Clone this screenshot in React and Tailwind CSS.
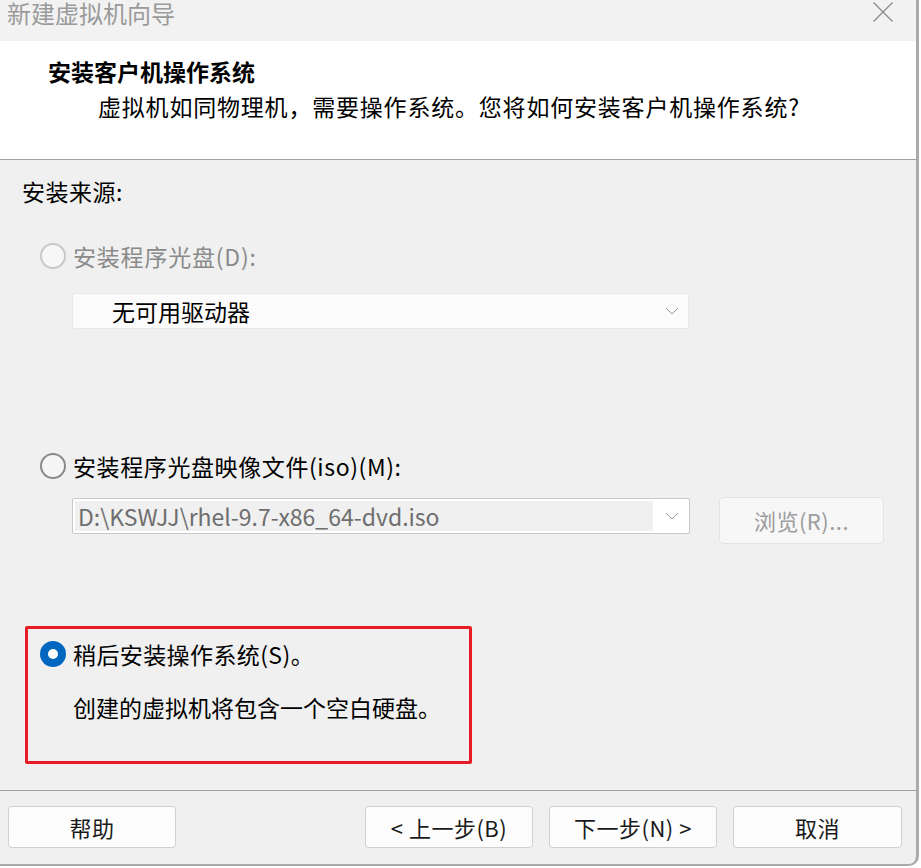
import React from "react";

const F = { fontFamily: '"Noto Sans CJK SC", "Noto Sans", sans-serif' };

function Chevron() {
  return (
    <svg width="14" height="8" viewBox="0 0 14 8" className="shrink-0">
      <polyline points="1,1 7,7 13,1" fill="none" stroke="#9a9a9a" strokeWidth="1" />
    </svg>
  );
}

function Radio({ checked, disabled }) {
  if (checked) {
    return (
      <div className="w-[26px] h-[26px] rounded-full bg-[#0067c0] flex items-center justify-center shrink-0">
        <div className="w-[10px] h-[10px] rounded-full bg-white" />
      </div>
    );
  }
  return (
    <div
      className={
        "w-[26px] h-[26px] rounded-full border-2 shrink-0 " +
        (disabled ? "border-[#c9c9c9] bg-[#f7f7f7]" : "border-[#8a8a8a] bg-[#f5f5f5]")
      }
    />
  );
}

function Btn({ children, w }) {
  return (
    <div
      className={
        "h-[42px] rounded-[4px] border border-[#d0d0d0] bg-[#fdfdfd] flex items-center justify-center text-[22px] tracking-[0.5px] text-[#1a1a1a] " +
        w
      }
    >
      {children}
    </div>
  );
}

export default function App() {
  return (
    <div className="w-[921px] h-[868px] bg-white overflow-hidden" style={F}>
      <div className="w-[919px] h-[866px] border-r-[3px] border-b-[2px] border-[#ababab] rounded-br-[10px] overflow-hidden flex flex-col bg-[#f0f0f0]">
        {/* title bar */}
        <div className="h-[41px] shrink-0 bg-[#f2f2f2] flex items-start justify-between">
          <div className="pl-[7px] text-[24px] leading-[26px] text-[#9a9a9a]">新建虚拟机向导</div>
          <svg width="22" height="22" viewBox="0 0 22 22" className="mt-[1px] mr-[22px]">
            <line x1="1.5" y1="1.5" x2="20.5" y2="20.5" stroke="#8a8a8a" strokeWidth="1.3" />
            <line x1="20.5" y1="1.5" x2="1.5" y2="20.5" stroke="#8a8a8a" strokeWidth="1.3" />
          </svg>
        </div>
        {/* header */}
        <div className="h-[119px] shrink-0 bg-white border-b border-[#a0a0a0] pl-[48px] pt-[14px]">
          <div className="text-[23px] leading-[32px] font-bold text-black">安装客户机操作系统</div>
          <div className="mt-[3px] pl-[50px] text-[23px] leading-[32px] text-black tracking-[0.8px]">
            虚拟机如同物理机，需要操作系统。您将如何安装客户机操作系统?
          </div>
        </div>
        {/* content */}
        <div className="h-[631px] shrink-0 border-b border-[#a0a0a0] pt-[15px] flex flex-col">
          <div className="pl-[22px] text-[23px] leading-[32px] text-black tracking-[0.5px]">安装来源:</div>

          <div className="mt-[36px] pl-[40px] flex items-center h-[26px]">
            <Radio disabled />
            <span className="ml-[7px] text-[23px] leading-[32px] text-[#8a8a8a] tracking-[0.8px]">安装程序光盘(D):</span>
          </div>

          <div className="mt-[24px] ml-[72px] w-[617px] h-[36px] bg-[#fbfbfb] border border-[#e8e8e8] rounded-[2px] flex items-center justify-between pl-[39px] pr-[9px]">
            <span className="text-[23px] leading-[32px] text-black">无可用驱动器</span>
            <Chevron />
          </div>

          <div className="mt-[124px] pl-[40px] flex items-center h-[26px]">
            <Radio />
            <span className="ml-[7px] text-[23px] leading-[32px] text-black tracking-[0.6px]">安装程序光盘映像文件(iso)(M):</span>
          </div>

          <div className="mt-[19px] ml-[72px] flex items-start">
            <div className="w-[618px] h-[36px] bg-white border border-[#c9c9c9] rounded-[2px] flex items-center p-[2px] pr-[10px]">
              <div className="flex-1 h-[30px] bg-[#f0f0f0] flex items-center pl-[3px] text-[23px] text-[#6e6e6e]">
                D:\KSWJJ\rhel-9.7-x86_64-dvd.iso
              </div>
              <div className="ml-[12px]">
                <Chevron />
              </div>
            </div>
            <div className="ml-[29px] -mt-[1px] w-[165px] h-[47px] bg-[#f7f7f7] border border-[#e3e3e3] rounded-[4px] flex items-center justify-center text-[22px] tracking-[0.5px] text-[#9c9c9c]">
              浏览(R)...
            </div>
          </div>

          <div className="mt-[82px] ml-[25px] w-[447px] h-[138px] border-[3px] border-[#e81c24] rounded-[2px] pt-[12px] pl-[12px]">
            <div className="flex items-center h-[26px]">
              <Radio checked />
              <span className="ml-[7px] text-[23px] leading-[32px] text-black tracking-[0.4px]">稍后安装操作系统(S)。</span>
            </div>
            <div className="mt-[24px] pl-[33px] text-[23px] leading-[32px] text-black">创建的虚拟机将包含一个空白硬盘。</div>
          </div>
        </div>
        {/* buttons */}
        <div className="flex-1 pt-[15px] pl-[8px] flex items-start">
          <Btn w="w-[168px]">帮助</Btn>
          <div className="ml-[189px]">
            <Btn w="w-[168px]">&lt; 上一步(B)</Btn>
          </div>
          <div className="ml-[16px]">
            <Btn w="w-[168px]">下一步(N) &gt;</Btn>
          </div>
          <div className="ml-[16px]">
            <Btn w="w-[169px]">取消</Btn>
          </div>
        </div>
      </div>
    </div>
  );
}
